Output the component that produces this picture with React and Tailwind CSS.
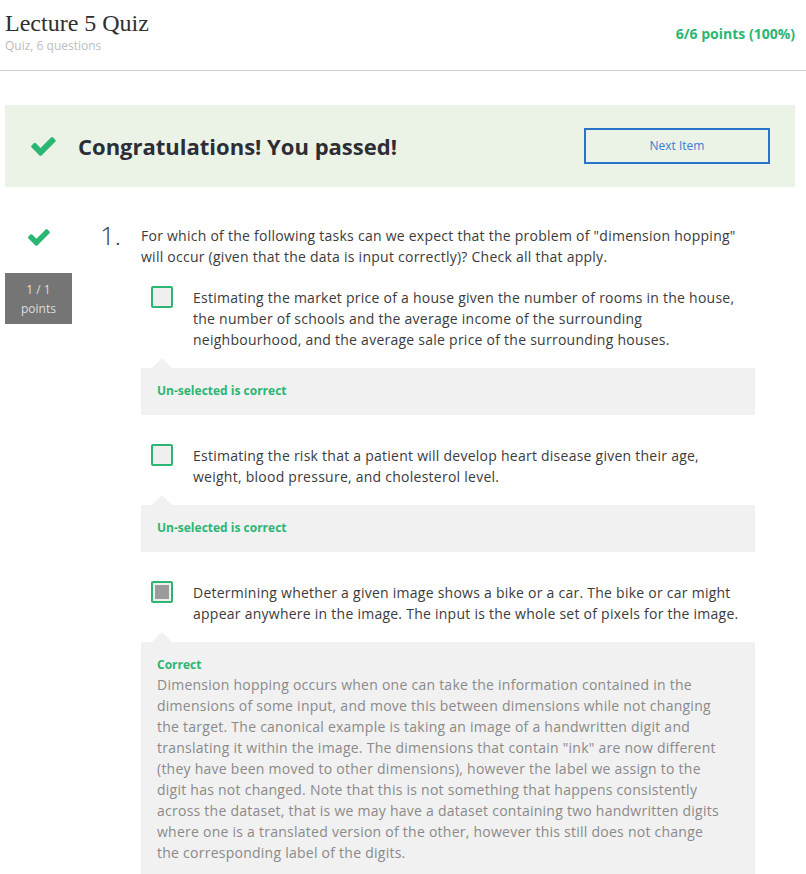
import React from "react";

const sans = { fontFamily: '"Open Sans", "Liberation Sans", sans-serif' };

function Check({ className }) {
  return (
    <svg viewBox="120 330 1560 1200" className={className} fill="currentColor">
      <path d="M1671 566q0 40-28 68l-724 724-136 136q-28 28-68 28t-68-28l-136-136-362-362q-28-28-28-68t28-68l136-136q28-28 68-28t68 28l294 295 656-657q28-28 68-28t68 28l136 136q28 28 28 68z" />
    </svg>
  );
}

function Option({ text, selected, children, first }) {
  return (
    <div className={first ? "mt-[20px]" : "mt-[30px]"}>
      <div className="flex items-start pl-[10px]">
        <div className="mt-[-1px] w-[22px] h-[22px] shrink-0 rounded-[2px] border-2 border-[#2bb673] bg-[#efefef] flex items-center justify-center">
          {selected && <div className="w-[14px] h-[14px] bg-[#9b9b9b]" />}
        </div>
        <p className="ml-[20px] w-[548px] text-[14px] leading-[21px] tracking-[0.25px] text-[#3b3b3b]">{text}</p>
      </div>
      <div className="relative mt-[18px] bg-[#f1f1f1] pl-[16px] pr-[30px] pt-[13px] pb-[15px]">
        <div className="absolute left-[11px] top-[-10px] w-0 h-0 border-l-[10px] border-r-[10px] border-b-[10px] border-l-transparent border-r-transparent border-b-[#f1f1f1]" />
        {children}
      </div>
    </div>
  );
}

export default function App() {
  return (
    <div className="w-[806px] bg-white min-h-[874px]" style={sans}>
      {/* header */}
      <div className="h-[71px] border-b border-[#cfcfcf] flex justify-between px-[5px]">
        <div className="pt-[8px]">
          <h1 className="text-[24px] leading-[30px] text-[#2f2f2f]" style={{ fontFamily: '"Liberation Serif", serif' }}>
            Lecture 5 Quiz
          </h1>
          <p className="text-[12px] leading-[16px] text-[#bdbdbd]">Quiz, 6 questions</p>
        </div>
        <div className="pt-[23px] pr-[6px] text-[14px] font-bold text-[#2bb673]">6/6 points (100%)</div>
      </div>

      {/* banner */}
      <div className="mt-[34px] ml-[5px] mr-[11px] h-[82px] bg-[#ebf3e7] flex items-center pl-[26px] pr-[25px]">
        <Check className="w-[25px] h-[19px] text-[#2bb673]" />
        <div className="ml-[22px] text-[22px] font-bold text-[#2d2d35] flex-1 mt-[1px]">Congratulations! You passed!</div>
        <button className="w-[186px] h-[36px] border-2 border-[#2a73cc] text-[12px] text-[#3a7bd5] bg-transparent">
          Next Item
        </button>
      </div>

      {/* question */}
      <div className="flex mt-[38px] ml-[5px]">
        <div className="w-[67px] shrink-0 flex flex-col items-center">
          <Check className="mt-[4px] w-[22px] h-[17px] text-[#2bb673]" />
          <div className="mt-[27px] w-[67px] h-[51px] bg-[#757575] flex flex-col items-center justify-center text-[12px] leading-[19px] text-[#dedede]">
            <span>1 / 1</span>
            <span>points</span>
          </div>
        </div>
        <div className="w-[28px] shrink-0" />
        <div className="w-[41px] shrink-0 text-[26px] font-light leading-[26px] text-[#333] mt-[-3px]">1.</div>
        <div className="w-[614px]">
          <p className="text-[14px] leading-[21px] tracking-[0.25px] text-[#3b3b3b]">
            For which of the following tasks can we expect that the problem of "dimension hopping" will occur (given that the data is input correctly)? Check all that apply.
          </p>

          <Option
            first
            text="Estimating the market price of a house given the number of rooms in the house, the number of schools and the average income of the surrounding neighbourhood, and the average sale price of the surrounding houses."
          >
            <p className="text-[12px] leading-[19px] font-bold text-[#2bb673]">Un-selected is correct</p>
          </Option>

          <Option text="Estimating the risk that a patient will develop heart disease given their age, weight, blood pressure, and cholesterol level.">
            <p className="text-[12px] leading-[19px] font-bold text-[#2bb673]">Un-selected is correct</p>
          </Option>

          <Option
            selected
            text="Determining whether a given image shows a bike or a car. The bike or car might appear anywhere in the image. The input is the whole set of pixels for the image."
          >
            <p className="text-[12px] leading-[19px] font-bold text-[#2bb673]">Correct</p>
            <p className="text-[14px] leading-[21px] tracking-[0.25px] text-[#8a8a8a]">
              Dimension hopping occurs when one can take the information contained in the dimensions of some input, and move this between dimensions while not changing the target. The canonical example is taking an image of a handwritten digit and translating it within the image. The dimensions that contain "ink" are now different (they have been moved to other dimensions), however the label we assign to the digit has not changed. Note that this is not something that happens consistently across the dataset, that is we may have a dataset containing two handwritten digits where one is a translated version of the other, however this still does not change the corresponding label of the digits.
            </p>
          </Option>
        </div>
      </div>
    </div>
  );
}
